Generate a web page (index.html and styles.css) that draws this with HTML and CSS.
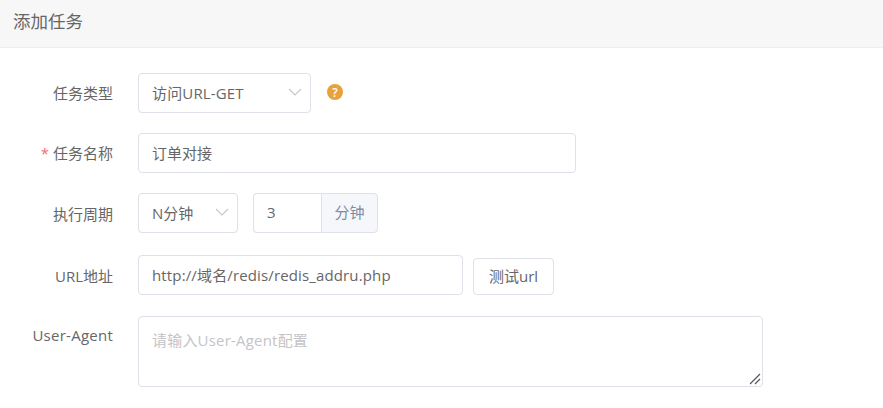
FILE: index.html
```html
<!DOCTYPE html>
<html>
<head>
    <title>添加任务</title>
    <link rel="stylesheet" href="styles.css">
</head>
<body>
    <div class="panel-title">添加任务</div>

    <form class="task-form">
        <div class="form-row row-type">
            <label class="form-label">任务类型</label>
            <div class="select select-type">
                <span class="latin">访问URL-GET</span>
                <svg class="chevron" width="14" height="8" viewBox="0 0 14 8"><path d="M1 1l6 6 6-6" fill="none" stroke="#c4c6cf" stroke-width="1.1"/></svg>
            </div>
            <span class="help-icon">?</span>
        </div>

        <div class="form-row row-name">
            <label class="form-label"><em class="required">*</em> 任务名称</label>
            <input class="input input-name" type="text" value="订单对接">
        </div>

        <div class="form-row row-period">
            <label class="form-label label-low">执行周期</label>
            <div class="select select-period">
                <span>N分钟</span>
                <svg class="chevron" width="14" height="8" viewBox="0 0 14 8"><path d="M1 1l6 6 6-6" fill="none" stroke="#c4c6cf" stroke-width="1.1"/></svg>
            </div>
            <div class="input-group">
                <input class="input input-num" type="text" value="3">
                <span class="input-addon">分钟</span>
            </div>
        </div>

        <div class="form-row row-url">
            <label class="form-label label-low">URL地址</label>
            <input class="input input-url" type="text" value="http://域名/redis/redis_addru.php">
            <button class="button" type="button">测试url</button>
        </div>

        <div class="form-row row-agent">
            <label class="form-label label-top">User-Agent</label>
            <div class="textarea-wrap">
                <textarea class="textarea" placeholder="请输入User-Agent配置"></textarea>
                <svg class="grip" width="12" height="12" viewBox="0 0 12 12"><path d="M1 11L11 1M6 11l5-5" fill="none" stroke="#555" stroke-width="1.2"/></svg>
            </div>
        </div>
    </form>
</body>
</html>
```

FILE: styles.css
```css
* {
    box-sizing: border-box;
}

body {
    margin: 0;
    background: #fff;
    color: #666;
    font-family: "Open Sans", "Noto Sans CJK SC", sans-serif;
    font-size: 15px;
    overflow: hidden;
}

.panel-title {
    height: 48px;
    padding: 0 13px;
    line-height: 42px;
    font-size: 17.5px;
    color: #666;
    background: #f7f7f7;
    border-bottom: 1px solid #eee;
}

.task-form {
    padding-top: 25px;
}

.form-row {
    display: flex;
    align-items: center;
    height: 40px;
}

.row-name,
.row-period {
    margin-top: 20px;
}

.row-url {
    margin-top: 22px;
}

.row-agent {
    align-items: flex-start;
    height: 71px;
    margin-top: 21px;
}

.form-label {
    flex: none;
    width: 113px;
    margin-right: 25px;
    padding-bottom: 2px;
    text-align: right;
    color: #666;
}

.label-low {
    padding-bottom: 0;
}

.label-top {
    padding-bottom: 0;
    line-height: 38px;
    letter-spacing: 0.25px;
}

.required {
    font-style: normal;
    color: #f56c6c;
}

.select,
.input,
.textarea,
.button {
    border: 1px solid #dfe0e8;
    border-radius: 4px;
    background: #fff;
    color: #666;
    font-family: inherit;
    font-size: 15px;
}

.select {
    display: flex;
    align-items: center;
    justify-content: space-between;
    height: 40px;
    padding: 0 8px 2px 13px;
}

.select-type {
    width: 173px;
}

.select-period {
    width: 100px;
}

.latin {
    letter-spacing: 0.15px;
}

.help-icon {
    width: 16px;
    height: 16px;
    margin-left: 16px;
    margin-top: -2px;
    border-radius: 50%;
    background: #e6a23c;
    color: #fff;
    font-size: 12px;
    font-weight: 600;
    line-height: 17px;
    text-align: center;
}

.input {
    height: 40px;
    padding: 0 13px 2px;
    outline: none;
}

.input-name {
    width: 438px;
}

.input-url {
    width: 325px;
    letter-spacing: 0.14px;
}

.input-group {
    display: flex;
    margin-left: 15px;
}

.input-num {
    width: 68px;
    border-right: none;
    border-radius: 4px 0 0 4px;
}

.input-addon {
    width: 57px;
    height: 40px;
    line-height: 37px;
    text-align: center;
    color: #7d8ba3;
    background: #f5f7fa;
    border: 1px solid #dfe0e8;
    border-radius: 0 4px 4px 0;
}

.button {
    width: 81px;
    height: 37px;
    margin-left: 10px;
    margin-top: 3px;
    padding: 0 0 2px;
}

.textarea-wrap {
    position: relative;
    width: 625px;
    height: 71px;
}

.textarea {
    display: block;
    width: 100%;
    height: 100%;
    padding: 12px 13px;
    line-height: 22px;
    letter-spacing: 0.2px;
    outline: none;
    resize: none;
}

.textarea::placeholder {
    color: #c4c4c8;
}

.grip {
    position: absolute;
    right: 2px;
    bottom: 2px;
}
```
